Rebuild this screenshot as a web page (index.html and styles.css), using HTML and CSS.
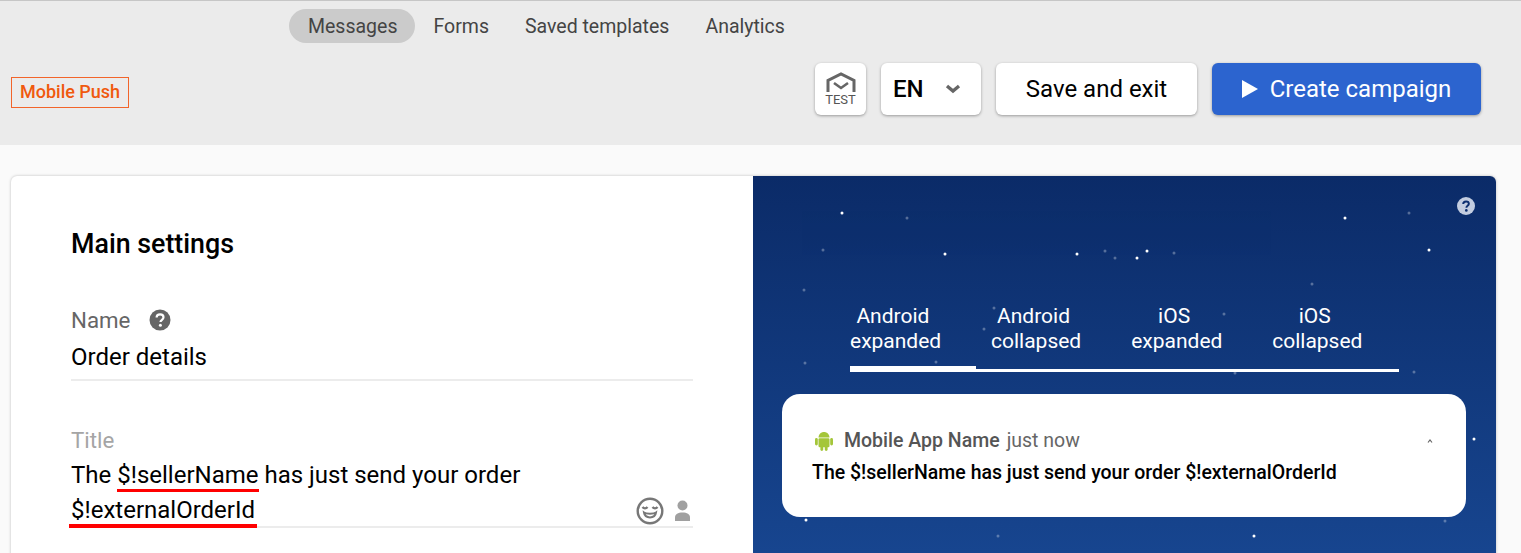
FILE: index.html
```html
<!DOCTYPE html>
<html lang="en">
<head>
  <meta charset="UTF-8" />
  <title>Mobile Push</title>
  <link rel="stylesheet" href="styles.css">
</head>
<body>
  <header class="top">
    <nav class="nav">
      <a class="nav-item active">Messages</a>
      <a class="nav-item">Forms</a>
      <a class="nav-item">Saved templates</a>
      <a class="nav-item">Analytics</a>
    </nav>
    <div class="toolbar">
      <span class="badge">Mobile Push</span>
      <div class="actions">
        <button class="btn btn-test">
          <svg width="30" height="21" viewBox="0 0 30 21">
            <path d="M2 20V8.500L15 2l13 6.500V20" fill="none" stroke="#666" stroke-width="3"/>
            <path d="M8 11l7 5 7-5" fill="none" stroke="#666" stroke-width="2.600"/>
          </svg>
          <span>TEST</span>
        </button>
        <button class="btn btn-lang">
          <span>EN</span>
          <svg width="16" height="10" viewBox="0 0 16 10"><path d="M2 2l6 5 6-5" fill="none" stroke="#666" stroke-width="3.400"/></svg>
        </button>
        <button class="btn btn-save">Save and exit</button>
        <button class="btn btn-create">
          <svg width="16" height="18" viewBox="0 0 16 18"><path d="M0 0l16 9-16 9z" fill="#fff"/></svg>
          Create campaign
        </button>
      </div>
    </div>
  </header>

  <main class="card">
    <section class="settings">
      <h2>Main settings</h2>

      <div class="field field-name">
        <label>Name
          <svg class="help" width="22" height="22" viewBox="0 0 22 22">
            <circle cx="11" cy="11" r="10.500" fill="#666"/>
            <path d="M7.600 8.600c0-2 1.500-3.200 3.500-3.200s3.400 1.100 3.400 2.900c0 2.500-3 2.500-3 4.800" fill="none" stroke="#fff" stroke-width="2.200"/>
            <circle cx="11.400" cy="16.200" r="1.500" fill="#fff"/>
          </svg>
        </label>
        <div class="value">Order details</div>
      </div>

      <div class="field field-title">
        <label class="muted">Title</label>
        <div class="value-row">
          <div class="value">The <span class="mark">$!sellerName</span> has just send your order <span class="mark mark-last">$!externalOrderId</span></div>
          <div class="value-icons">
            <svg width="28" height="28" viewBox="0 0 28 28" fill="none" stroke="#777">
              <circle cx="14" cy="14" r="12.300" stroke-width="2.400"/>
              <path d="M6.500 10c1.300 1.800 3.700 1.800 5 0M16.500 10c1.300 1.800 3.700 1.800 5 0" stroke-width="2.200"/>
              <path d="M8 15.500c2 1.500 10 1.500 12 0c-1 6.500-11 6.500-12 0z" stroke-width="2"/>
            </svg>
            <svg width="15" height="22" viewBox="0 0 15 22" fill="#a0a0a0">
              <circle cx="7.500" cy="5.500" r="5"/>
              <path d="M0 21v-3.500C0 14 3 12.500 7.500 12.500S15 14 15 17.500V21z"/>
            </svg>
          </div>
        </div>
      </div>
    </section>

    <section class="preview">
      <svg class="stars" width="743" height="377" viewBox="753 176 743 377">
        <g fill="#fff">
          <circle cx="842" cy="213" r="1.500"/><circle cx="1345" cy="218" r="1.500"/><circle cx="945" cy="254" r="1.500"/>
          <circle cx="1077" cy="254" r="1.500"/><circle cx="1147" cy="251" r="1.500"/><circle cx="1137" cy="258" r="1.500"/>
          <circle cx="1429" cy="250" r="1.500"/><circle cx="1474" cy="439" r="1.500"/><circle cx="806" cy="520" r="1.500"/>
          <circle cx="1254" cy="536" r="1.500"/>
        </g>
        <g fill="#fff" opacity="0.3">
          <circle cx="907" cy="218" r="1.500"/><circle cx="1409" cy="213" r="1.500"/><circle cx="823" cy="250" r="1.500"/>
          <circle cx="1105" cy="251" r="1.500"/><circle cx="1115" cy="258" r="1.500"/><circle cx="1174" cy="253" r="1.500"/>
          <circle cx="804" cy="290" r="1.500"/><circle cx="1312" cy="284" r="1.500"/><circle cx="994" cy="308" r="1.500"/>
          <circle cx="1224" cy="314" r="1.500"/><circle cx="984" cy="329" r="1.500"/><circle cx="805" cy="363" r="1.500"/>
          <circle cx="936" cy="362" r="1.500"/><circle cx="1235" cy="373" r="1.500"/><circle cx="1414" cy="372" r="1.500"/>
          <circle cx="998" cy="536" r="1.500"/><circle cx="1445" cy="521" r="1.500"/>
        </g>
      </svg>

      <svg class="preview-help" width="18" height="18" viewBox="0 0 22 22">
        <circle cx="11" cy="11" r="11" fill="#c3cde0"/>
        <path d="M7.600 8.600c0-2 1.500-3.200 3.500-3.200s3.400 1.100 3.400 2.900c0 2.500-3 2.500-3 4.800" fill="none" stroke="#0d2f70" stroke-width="2.400"/>
        <circle cx="11.400" cy="16.400" r="1.600" fill="#0d2f70"/>
      </svg>

      <div class="tabs">
        <div class="tab active">Android&nbsp;<br>expanded</div>
        <div class="tab">Android&nbsp;<br>collapsed</div>
        <div class="tab">iOS&nbsp;<br>expanded</div>
        <div class="tab">iOS&nbsp;<br>collapsed</div>
      </div>

      <div class="notif">
        <div class="notif-head">
          <svg width="18" height="20" viewBox="0 0 18 20" fill="#a4c639">
            <path d="M3.500 6.500C3.700 3.200 6 1 9 1s5.300 2.200 5.500 5.500z"/>
            <rect x="3.500" y="7.300" width="11" height="9" rx="1.200"/>
            <rect x="0" y="7" width="2.800" height="7.500" rx="1.400"/>
            <rect x="15.200" y="7" width="2.800" height="7.500" rx="1.400"/>
            <rect x="5.400" y="15" width="2.800" height="5" rx="1.400"/>
            <rect x="9.800" y="15" width="2.800" height="5" rx="1.400"/>
          </svg>
          <b>Mobile App Name</b>
          <span>just now</span>
          <svg class="caret" width="6" height="4" viewBox="0 0 6 4"><path d="M1 3.500l2-2.500 2 2.500" fill="none" stroke="#666" stroke-width="1.200"/></svg>
        </div>
        <div class="notif-text">The $!sellerName has just send your order $!externalOrderId</div>
      </div>
    </section>
  </main>
</body>
</html>
```

FILE: styles.css
```css
* { box-sizing: border-box; margin: 0; padding: 0; }
html, body { height: 100%; overflow: hidden; }
body {
  font-family: Roboto, sans-serif;
  background: #fafafa;
  color: #000;
}

/* Header */
.top {
  height: 145px;
  background: #ebebeb;
  border-top: 1px solid #c6c6c6;
}
.nav {
  display: flex;
  align-items: center;
  height: 34px;
  margin-top: 8px;
  margin-left: 289px;
  font-size: 19.500px;
  color: #444;
}
.nav-item { padding: 0 18px; height: 34px; line-height: 36px; }
.nav-item.active { background: #cbcbcb; border-radius: 17px; padding: 0 18px 0 19px; }
.toolbar {
  display: flex;
  align-items: center;
  justify-content: space-between;
  margin-top: 20px;
  padding: 0 40px 0 11px;
}
.badge {
  border: 1px solid #f2642a;
  color: #f0590e;
  font-size: 18px;
  font-weight: 500;
  line-height: 27px;
  padding: 0 8px 2px;
  margin-top: 6px;
}
.actions { display: flex; gap: 15px; }
.btn {
  height: 52px;
  border: none;
  border-radius: 6px;
  background: #fff;
  box-shadow: 0 1px 3px rgba(0,0,0,0.35);
  font-family: inherit;
  font-size: 24px;
  color: #000;
  display: flex;
  align-items: center;
  justify-content: center;
}
.btn-test {
  width: 51px;
  flex-direction: column;
  font-size: 13px;
  color: #555;
  line-height: 13px;
}
.btn-lang { width: 100px; justify-content: flex-start; padding-left: 12px; font-weight: 500; }
.btn-lang svg { margin-left: 21px; }
.btn-save { width: 201px; }
.btn-create { width: 269px; background: #2c64cf; color: #fff; gap: 12px; }

/* Card */
.card {
  display: flex;
  height: 500px;
  margin: 31px 25px 0 11px;
  background: #fff;
  border-radius: 6px;
  box-shadow: 0 0 3px rgba(0,0,0,0.25);
  overflow: hidden;
}
.settings { width: 742px; padding: 53px 60px 0; }
.settings h2 { font-size: 26.800px; font-weight: 500; line-height: 30px; }
.field label { display: flex; align-items: center; gap: 19px; font-size: 22.300px; color: #666; line-height: 28px; }
.field label.muted { color: #a5a5a5; }
.field .value { font-size: 24px; line-height: 35px; }
.field-name { margin-top: 47px; border-bottom: 2px solid #ececec; padding-bottom: 4px; }
.field-name .value { margin-top: 5px; line-height: 36px; }
.field-title { margin-top: 45px; border-bottom: 2px solid #ececec; }
.value-row { display: flex; justify-content: space-between; align-items: flex-end; margin-top: 4px; margin-bottom: -2px; }
.field-title .value { width: 520px; }
.mark { border-bottom: 3px solid #f00; }
.mark-last { border-bottom-width: 4px; margin-left: -2px; padding-left: 2px; padding-right: 2px; }
.value-icons { display: flex; align-items: center; gap: 11px; padding: 0 3px 3px 0; }

/* Preview */
.preview {
  position: relative;
  flex: 1;
  background: linear-gradient(#0b2b68, #17458f 377px);
  padding: 127px 30px 0 29px;
}
.stars { position: absolute; top: 0; left: 0; }
.preview-help { position: absolute; top: 21px; right: 21px; }
.tabs {
  position: relative;
  display: flex;
  margin-left: 68px;
  width: 549px;
  padding-top: 1px;
  padding-bottom: 15px;
  border-bottom: 3px solid #fff;
  color: #fff;
  font-size: 21px;
  line-height: 25px;
}
.tab { width: 141px; padding-right: 50px; text-align: center; white-space: nowrap; }
.tab.active::after {
  content: "";
  position: absolute;
  left: 0;
  bottom: -3px;
  width: 126px;
  height: 6px;
  background: #fff;
}
.notif {
  position: relative;
  margin-top: 22px;
  height: 123px;
  background: #fff;
  border-radius: 18px;
  padding: 36px 30px 0 30px;
}
.notif-head { display: flex; align-items: center; font-size: 19.500px; padding-left: 3px; color: #666; line-height: 22px; }
.notif-head b { font-weight: 500; color: #555; margin-left: 11px; margin-right: 7px; }
.notif-head .caret { margin-left: auto; margin-right: 3px; }
.notif-text { margin-top: 10px; font-size: 19.500px; font-weight: 500; line-height: 22px; }
```
